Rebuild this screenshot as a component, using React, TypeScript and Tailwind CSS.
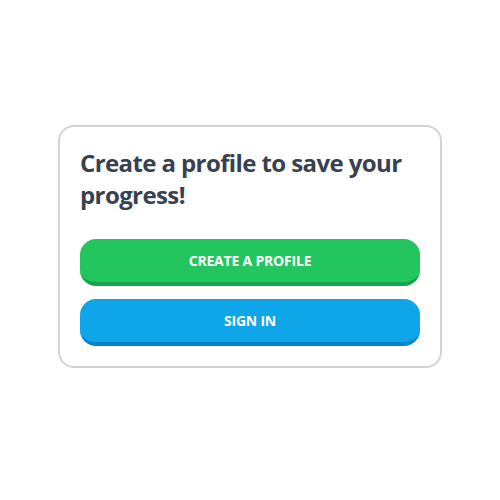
export default function App() {
  return (
    <div
      className="flex h-screen w-full items-center justify-center bg-white pb-2"
      style={{ fontFamily: '"Open Sans", "Noto Sans", sans-serif' }}
    >
      <div className="w-[384px] rounded-2xl border-2 border-[#d4d4d4] bg-white px-5 pb-5 pt-5">
        <h2 className="text-[24px] font-bold leading-[32px] tracking-[-0.6px] text-[#374151]">
          Create a profile to save your progress!
        </h2>
        <div className="mt-7 flex flex-col gap-[13px]">
          <button className="h-[47px] w-full rounded-2xl border-b-4 border-[#16a34a] bg-[#22c55e] text-[14px] font-bold uppercase tracking-[-0.2px] text-white">
            Create a profile
          </button>
          <button className="h-[47px] w-full rounded-2xl border-b-4 border-[#0284c7] bg-[#0ea5e9] text-[14px] font-bold uppercase tracking-[-0.2px] text-white">
            Sign in
          </button>
        </div>
      </div>
    </div>
  );
}
